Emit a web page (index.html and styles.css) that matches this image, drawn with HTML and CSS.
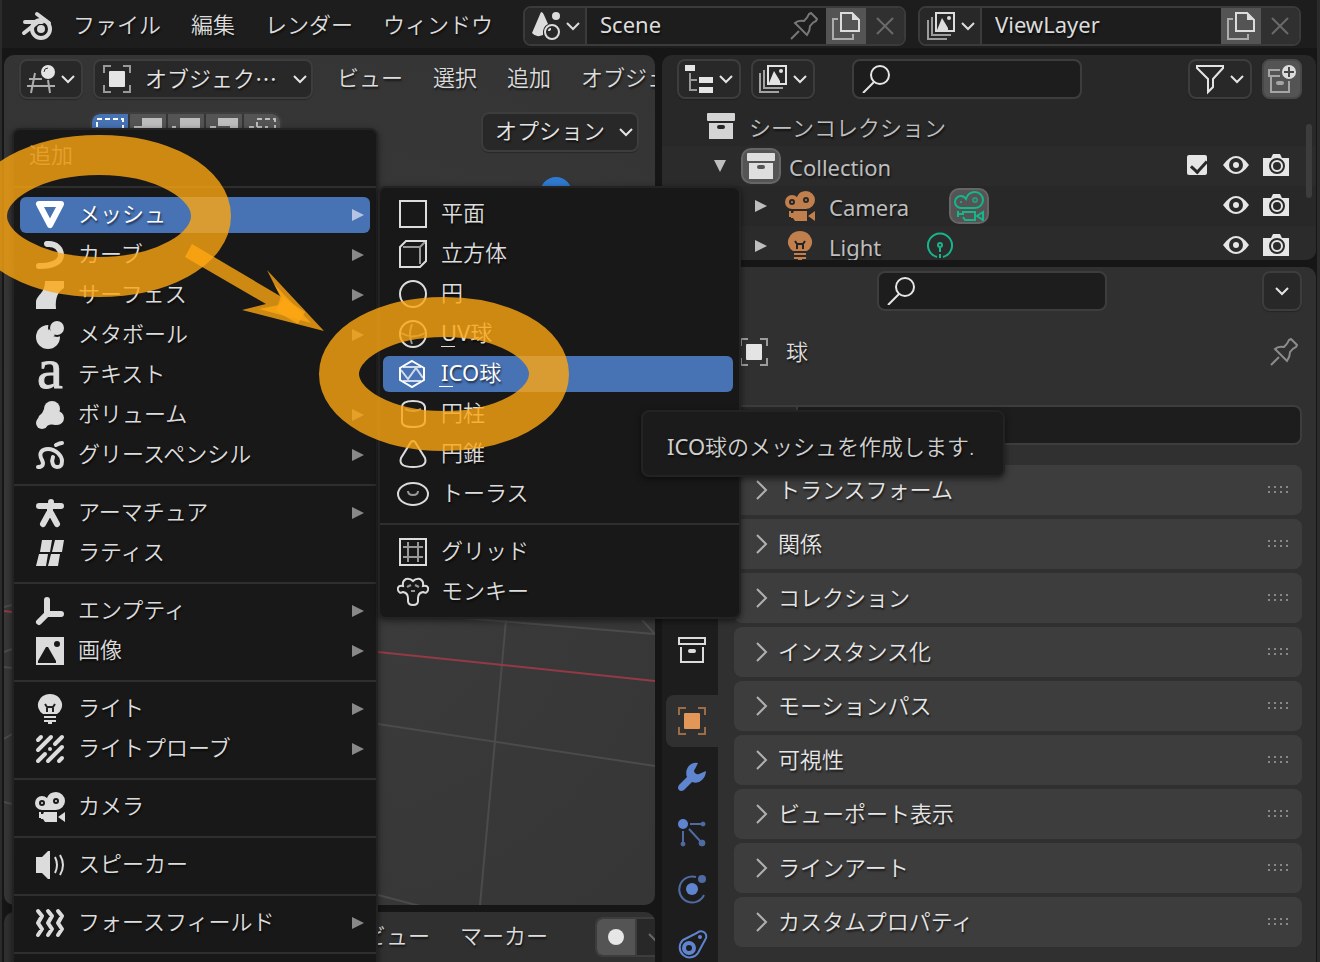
FILE: index.html
```html
<!DOCTYPE html>
<html lang="ja">
<head>
<meta charset="utf-8">
<title>Blender</title>
<link rel="stylesheet" href="styles.css">
</head>
<body>
<svg class="defs" aria-hidden="true">
  <symbol id="chev" viewBox="0 0 14 10"><path d="M1 2L7 8L13 2" fill="none" stroke="currentColor" stroke-width="2"/></symbol>
  <symbol id="chev-r" viewBox="0 0 12 20"><path d="M1 1L10 10L1 19" fill="none" stroke="currentColor" stroke-width="2"/></symbol>
  <symbol id="tri" viewBox="0 0 12 12"><path d="M0 0L12 6L0 12Z" fill="currentColor"/></symbol>
  <symbol id="cross" viewBox="0 0 18 18"><path d="M1 1L17 17M17 1L1 17" stroke="currentColor" stroke-width="2"/></symbol>
  <symbol id="dots" viewBox="0 0 22 8"><path d="M0 1h2M6 1h2M12 1h2M18 1h2M0 6h2M6 6h2M12 6h2M18 6h2" stroke="currentColor" stroke-width="2"/></symbol>
  <symbol id="pin" viewBox="0 0 28 28"><path d="M21 1L27 7L26 9Q23 10 20 14Q20 19 17 23L5 11Q8 8 14 9Q18 5 19 2ZM9 19L1 27" fill="none" stroke="currentColor" stroke-width="2"/></symbol>
  <symbol id="copy" viewBox="0 0 28 28"><path d="M6 7H1V27H21V22" fill="none" stroke="currentColor" stroke-width="2" opacity=".65"/><path d="M9 1H20L27 8V19H9Z" fill="none" stroke="currentColor" stroke-width="2"/><path d="M20 0L28 8H20Z" fill="currentColor"/></symbol>
  <symbol id="search" viewBox="0 0 28 28"><circle cx="18" cy="10" r="9" fill="none" stroke="currentColor" stroke-width="2"/><path d="M12 17L1 28" stroke="currentColor" stroke-width="2"/></symbol>
  <symbol id="object" viewBox="0 0 28 28"><path d="M1 8V1H8M20 1H27V8M27 20V27H20M8 27H1V20" fill="none" stroke="currentColor" stroke-width="2" opacity=".6"/><rect x="6" y="6" width="16" height="16" rx="1" fill="currentColor"/></symbol>
  <symbol id="layers" viewBox="0 0 28 28"><path d="M1 8V27H20M5 5V23H24" fill="none" stroke="currentColor" stroke-width="2" opacity=".65"/><rect x="9" y="1" width="18" height="18" fill="none" stroke="currentColor" stroke-width="2"/><path d="M10 18L15 6L21 16V18Z" fill="currentColor"/><circle cx="22" cy="6" r="2" fill="currentColor"/></symbol>
  <symbol id="box" viewBox="0 0 28 28"><rect y="1" width="28" height="8" rx="1" fill="currentColor"/><path fill-rule="evenodd" d="M2 11H26V27H2ZM12 13Q10 13 10 15T12 17H16Q18 17 18 15T16 13Z" fill="currentColor"/></symbol>
  <symbol id="box-line" viewBox="0 0 28 28"><path d="M1 2H27V8H1ZM3 11V26H25V11" fill="none" stroke="currentColor" stroke-width="2"/><rect x="10" y="13" width="8" height="4" rx="2" fill="currentColor"/></symbol>
  <symbol id="camera" viewBox="0 0 30 30"><path fill-rule="evenodd" fill="currentColor" d="M7 4Q10 4 12 6Q14 0 21 0A9 9 0 0 1 21 18H7A7 7 0 0 1 7 4ZM7 8A3 3 0 1 0 7 14A3 3 0 1 0 7 8ZM21 6A3 3 0 1 0 21 12A3 3 0 1 0 21 6Z"/><circle cx="7" cy="11" r="1" fill="currentColor"/><circle cx="21" cy="9" r="1" fill="currentColor"/><path d="M4 20H6V22H8L9 20H22V30H10L8 27H6V26H4ZM30 20V30L23 25Z" fill="currentColor"/></symbol>
  <symbol id="camera-line" viewBox="0 0 30 30"><path fill="none" stroke="currentColor" stroke-width="2" d="M7 5Q10 5 12 8Q14 1 21 1A8 8 0 0 1 21 17H7A6 6 0 0 1 7 5ZM4 20V26M5 23H9V21H21V29H11L9 26M29 21V29L23 25Z"/><circle cx="7" cy="11" r="1" fill="currentColor"/><circle cx="21" cy="9" r="2" fill="none" stroke="currentColor" stroke-width="2" opacity=".7"/></symbol>
  <symbol id="bulb" viewBox="0 0 28 30"><path d="M14 0A12 11 0 0 1 21 20H7A12 11 0 0 1 14 0Z" fill="currentColor"/><path d="M9 10L11 13H17L19 10M11 12V18M17 12V18" fill="none" class="hole" stroke-width="2"/><path d="M8 23H20M8 27H20M12 29H16" stroke="currentColor" stroke-width="2"/></symbol>
  <symbol id="eye" viewBox="0 0 26 18"><path fill-rule="evenodd" fill="currentColor" d="M0 9Q13-9 26 9Q13 27 0 9ZM13 2A7 7 0 1 0 13 16A7 7 0 1 0 13 2Z"/><circle cx="13" cy="9" r="3" fill="currentColor"/></symbol>
  <symbol id="photo" viewBox="0 0 26 22"><path fill-rule="evenodd" fill="currentColor" d="M0 4H8L10 0H17L19 4H26V22H0ZM14 4A8 8 0 1 0 14 20A8 8 0 1 0 14 4Z"/><circle cx="14" cy="12" r="5" fill="none" stroke="currentColor" stroke-width="2"/></symbol>
</svg>

<div class="app">
  <header class="topbar">
    <nav class="menubar">
      <svg class="logo" viewBox="0 0 30 28" aria-hidden="true"><path d="M15 2L27 11M3 10H20M2 21L16 10" fill="none" stroke="currentColor" stroke-width="4" stroke-linecap="round"/><circle cx="19" cy="17" r="9" fill="none" stroke="currentColor" stroke-width="4"/><circle cx="19" cy="17" r="4" fill="currentColor"/></svg>
      <button>ファイル</button><button>編集</button><button>レンダー</button><button>ウィンドウ</button>
    </nav>
    <div class="idbar">
      <div class="idblock">
        <button class="id-type" aria-label="シーンを選択"><svg class="i28" viewBox="0 0 28 28"><path d="M9 0Q11 0 12 3L16 12Q10 15 11 23Q4 26 0 21Z" fill="currentColor"/><circle cx="24" cy="4" r="4" fill="currentColor"/><circle cx="20" cy="20" r="7" fill="none" stroke="currentColor" stroke-width="2"/><path d="M17 19Q17 17 19 17" stroke="currentColor" fill="none" stroke-width="2"/></svg><svg class="chev"><use href="#chev"/></svg></button>
        <input class="id-name latin" aria-label="シーン名" value="Scene">
        <button class="id-pin" aria-label="ピン止め"><svg class="i28"><use href="#pin"/></svg></button>
        <button class="id-copy" aria-label="新規シーン"><svg class="i28"><use href="#copy"/></svg></button>
        <button class="id-x" aria-label="シーンを削除"><svg class="cross"><use href="#cross"/></svg></button>
      </div>
      <div class="idblock">
        <button class="id-type" aria-label="ビューレイヤーを選択"><svg class="i28"><use href="#layers"/></svg><svg class="chev"><use href="#chev"/></svg></button>
        <input class="id-name latin" aria-label="ビューレイヤー名" value="ViewLayer">
        <button class="id-copy" aria-label="新規ビューレイヤー"><svg class="i28"><use href="#copy"/></svg></button>
        <button class="id-x" aria-label="ビューレイヤーを削除"><svg class="cross"><use href="#cross"/></svg></button>
      </div>
    </div>
  </header>

  <main class="areas">
    <div class="col">
      <section class="area viewport">
        <svg class="scene" aria-hidden="true">
          <g fill="none" stroke="#4b4b4b" stroke-width="2">
            <path d="M502 565L476 850M374 669L651 711M374 556L651 579M638 565L651 579M374 840L416 851M0 552L8 550M0 597L8 594M0 612L8 613M0 684L8 679M0 747L8 749"/>
          </g>
          <path d="M0 556L8 557M374 597L651 626" stroke="#933a47" stroke-width="2"/>
          <circle cx="552" cy="138" r="16" fill="#2f7ad0"/>
        </svg>
        <div class="bar">
          <button class="drop" aria-label="エディタータイプ"><svg class="i28" viewBox="0 0 28 28"><path d="M2 14H15M0 21H28M8 8L4 28M21 15L23 28" stroke="currentColor" stroke-width="2" opacity=".7"/><circle cx="21" cy="7" r="7" fill="currentColor"/><path d="M17 7Q17 3 21 3" fill="none" stroke="#333" stroke-width="1"/></svg><svg class="chev"><use href="#chev"/></svg></button>
          <button class="drop mode"><svg class="i28"><use href="#object"/></svg><span>オブジェク…</span><svg class="chev"><use href="#chev"/></svg></button>
          <nav class="links"><button>ビュー</button><button>選択</button><button>追加</button><button>オブジェクト</button></nav>
        </div>
        <div class="bar tools">
          <div class="selmodes">
            <button class="on" aria-label="新規選択"><svg viewBox="0 0 28 28"><path d="M1 1H27V27H1Z" fill="none" stroke="currentColor" stroke-width="2" stroke-dasharray="5 3"/></svg></button>
            <button aria-label="選択を拡張"><svg viewBox="0 0 28 28"><path d="M8 0H28V20H20V28H0V8H8Z" fill="currentColor"/></svg></button>
            <button aria-label="選択から除外"><svg viewBox="0 0 28 28"><path d="M8 0H28V20H8ZM0 8H4V12H0Z" fill="currentColor"/></svg></button>
            <button aria-label="選択を反転"><svg viewBox="0 0 28 28"><path d="M8 0H28V20H20V8H8ZM0 8H6V20H20V28H0Z" fill="currentColor"/></svg></button>
            <button aria-label="選択の交差"><svg viewBox="0 0 28 28"><path d="M9 1H27V19H9ZM1 9H19V27H1Z" fill="none" stroke="currentColor" stroke-width="2" stroke-dasharray="5 3"/></svg></button>
          </div>
          <button class="drop options"><span>オプション</span><svg class="chev"><use href="#chev"/></svg></button>
        </div>
      </section>
      <section class="area timeline">
        <nav class="links"><button>ビュー</button><button>マーカー</button></nav>
        <div class="keying"><button aria-label="自動キー挿入"><i></i></button><button class="more" aria-label="キー設定"><svg class="chev"><use href="#chev"/></svg></button></div>
      </section>
    </div>

    <div class="col">
      <section class="area outliner">
        <div class="bar">
          <button class="drop" aria-label="エディタータイプ"><svg class="i28" viewBox="0 0 28 28"><path d="M5 8V25H12M5 15H12" fill="none" stroke="currentColor" stroke-width="2" opacity=".6"/><path d="M0 0H10V6H0ZM14 12H28V18H14ZM14 22H28V28H14Z" fill="currentColor"/></svg><svg class="chev"><use href="#chev"/></svg></button>
          <button class="drop" aria-label="表示モード"><svg class="i28"><use href="#layers"/></svg><svg class="chev"><use href="#chev"/></svg></button>
          <label class="search"><svg class="i28"><use href="#search"/></svg><input type="search" aria-label="検索"></label>
          <button class="drop filter" aria-label="フィルター"><svg class="i28" viewBox="0 0 28 28"><path d="M1 1H27V3L17 14V22L12 27V14L1 3Z" fill="none" stroke="currentColor" stroke-width="2"/></svg><svg class="chev"><use href="#chev"/></svg></button>
          <button class="newcol" aria-label="新規コレクション"><svg viewBox="0 0 28 28" class="i28"><path d="M12 5H1V11H12M3 12V27H21V16" fill="none" stroke="currentColor" stroke-width="2" opacity=".6"/><rect x="8" y="16" width="8" height="4" rx="2" fill="currentColor" opacity=".6"/><circle cx="21" cy="7" r="7" fill="currentColor"/><path d="M16 7H26M21 2V12" stroke="#484848" stroke-width="2"/></svg></button>
        </div>
        <div class="tree">
          <div class="row root"><svg class="i28"><use href="#box"/></svg><span>シーンコレクション</span></div>
          <div class="row lv1"><svg class="tri down"><use href="#tri"/></svg><span class="badge"><svg class="i28"><use href="#box"/></svg></span><span class="latin">Collection</span>
            <div class="flags"><input type="checkbox" checked aria-label="Collection を有効化"><button aria-label="表示"><svg class="eye"><use href="#eye"/></svg></button><button aria-label="レンダー"><svg class="photo"><use href="#photo"/></svg></button></div></div>
          <div class="row lv2"><svg class="tri"><use href="#tri"/></svg><svg class="i30 orange"><use href="#camera"/></svg><span class="latin">Camera</span><span class="badge data-cam"><svg class="i30 green"><use href="#camera-line"/></svg></span>
            <div class="flags"><button aria-label="表示"><svg class="eye"><use href="#eye"/></svg></button><button aria-label="レンダー"><svg class="photo"><use href="#photo"/></svg></button></div></div>
          <div class="row lv2"><svg class="tri"><use href="#tri"/></svg><svg class="i30 orange"><use href="#bulb"/></svg><span class="latin">Light</span><svg class="i30 green data-light" viewBox="0 0 30 30"><path d="M12 26A12 12 0 1 1 18 26" fill="none" stroke="currentColor" stroke-width="2"/><circle cx="15" cy="14" r="2" fill="none" stroke="currentColor" stroke-width="2"/><path d="M15 17V30" stroke="currentColor" stroke-width="2" stroke-dasharray="4 2"/></svg>
            <div class="flags"><button aria-label="表示"><svg class="eye"><use href="#eye"/></svg></button><button aria-label="レンダー"><svg class="photo"><use href="#photo"/></svg></button></div></div>
          <div class="scroll"></div>
        </div>
      </section>

      <section class="area props">
        <nav class="tabs">
          <button aria-label="ツール"><svg class="i28"><use href="#box-line"/></svg></button>
          <button class="gap" aria-label="レンダー"><svg class="i28"><use href="#photo"/></svg></button>
          <button aria-label="出力"><svg class="i28"><use href="#copy"/></svg></button>
          <button aria-label="ビューレイヤー"><svg class="i28"><use href="#layers"/></svg></button>
          <button aria-label="シーン"><svg class="i28"><use href="#camera"/></svg></button>
          <button aria-label="ワールド"><svg class="i28"><use href="#bulb"/></svg></button>
          <button aria-label="コレクション"><svg class="i28"><use href="#box-line"/></svg></button>
          <button class="gap on" aria-label="オブジェクト"><svg class="i28"><use href="#object"/></svg></button>
          <button class="blue" aria-label="モディファイアー"><svg class="i28" viewBox="0 0 28 28"><path d="M20 0Q14-1 10 4Q7 9 9 14L1 22Q-1 25 1 27T6 27L14 19Q20 21 24 17Q28 13 28 8L21 11Q19 12 17 10Q15 8 17 6Z" fill="currentColor"/></svg></button>
          <button class="blue" aria-label="パーティクル"><svg class="i28" viewBox="0 0 28 28"><circle cx="5" cy="5" r="5" fill="currentColor"/><g opacity=".75" fill="currentColor" stroke="currentColor"><path d="M12 5H25M5 12V25M11 10L23 23" stroke-width="2"/><circle cx="25" cy="5" r="2"/><circle cx="5" cy="25" r="2"/><circle cx="24" cy="24" r="3"/></g></svg></button>
          <button class="blue" aria-label="物理演算"><svg class="i28" viewBox="0 0 28 28"><circle cx="14" cy="14" r="6" fill="currentColor"/><g opacity=".75"><path d="M18 2A13 13 0 1 0 26 20" fill="none" stroke="currentColor" stroke-width="2"/><circle cx="24" cy="4" r="4" fill="currentColor"/></g></svg></button>
          <button class="blue" aria-label="コンストレイント"><svg class="i28" viewBox="0 0 28 28"><path d="M5 9L19 2A5 5 0 0 1 27 9L20 22A10 10 0 1 1 5 9Z" fill="none" stroke="currentColor" stroke-width="2"/><circle cx="11" cy="17" r="5" fill="none" stroke="currentColor" stroke-width="4"/><circle cx="22" cy="6" r="2" fill="currentColor"/></svg></button>
        </nav>
        <div class="prop-main">
          <div class="prop-bar"><label class="search"><svg class="i28"><use href="#search"/></svg><input type="search" aria-label="プロパティを検索"></label><button class="drop only" aria-label="オプション"><svg class="chev"><use href="#chev"/></svg></button></div>
          <div class="crumb"><svg class="i28"><use href="#object"/></svg><span>球</span><button aria-label="ピン止め"><svg class="i28"><use href="#pin"/></svg></button></div>
          <div class="namefield"><button aria-label="オブジェクトを選択"></button><input aria-label="オブジェクト名"></div>
          <div class="panels">
            <button><svg><use href="#chev-r"/></svg><span>トランスフォーム</span><svg class="dots"><use href="#dots"/></svg></button>
            <button><svg><use href="#chev-r"/></svg><span>関係</span><svg class="dots"><use href="#dots"/></svg></button>
            <button><svg><use href="#chev-r"/></svg><span>コレクション</span><svg class="dots"><use href="#dots"/></svg></button>
            <button><svg><use href="#chev-r"/></svg><span>インスタンス化</span><svg class="dots"><use href="#dots"/></svg></button>
            <button><svg><use href="#chev-r"/></svg><span>モーションパス</span><svg class="dots"><use href="#dots"/></svg></button>
            <button><svg><use href="#chev-r"/></svg><span>可視性</span><svg class="dots"><use href="#dots"/></svg></button>
            <button><svg><use href="#chev-r"/></svg><span>ビューポート表示</span><svg class="dots"><use href="#dots"/></svg></button>
            <button><svg><use href="#chev-r"/></svg><span>ラインアート</span><svg class="dots"><use href="#dots"/></svg></button>
            <button><svg><use href="#chev-r"/></svg><span>カスタムプロパティ</span><svg class="dots"><use href="#dots"/></svg></button>
          </div>
        </div>
      </section>
    </div>
  </main>

  <div class="menu add-menu">
    <div class="menu-title">追加</div>
    <hr>
    <button class="on"><svg class="i28" viewBox="0 0 28 28"><path d="M3 3H25L14 24Z" fill="none" stroke="currentColor" stroke-width="6" stroke-linejoin="round"/></svg><span>メッシュ</span><svg class="tri"><use href="#tri"/></svg></button>
    <button><svg class="i28" viewBox="0 0 28 28"><path d="M11 3C20 2 25 8 25 14C25 21 17 25 3 25" fill="none" stroke="currentColor" stroke-width="6" stroke-linecap="round"/></svg><span>カーブ</span><svg class="tri"><use href="#tri"/></svg></button>
    <button><svg class="i28" viewBox="0 0 28 28"><path d="M9 0H28V7C22 11 19 16 20 28H0V21C1 13 9 13 9 0Z" fill="currentColor"/></svg><span>サーフェス</span><svg class="tri"><use href="#tri"/></svg></button>
    <button><svg class="i28" viewBox="0 0 28 28"><circle cx="12" cy="16" r="12" fill="currentColor"/><circle cx="21" cy="7" r="9" class="punch"/><circle cx="21" cy="7" r="7" fill="currentColor"/><path d="M13 8L19 14L15 17L10 13Z" fill="currentColor"/></svg><span>メタボール</span><svg class="tri"><use href="#tri"/></svg></button>
    <button><svg class="i28 glyph" viewBox="0 0 28 28" aria-hidden="true"><text x="1" y="27">a</text></svg><span>テキスト</span></button>
    <button><svg class="i28" viewBox="0 0 28 28"><circle cx="16" cy="8" r="8" fill="currentColor"/><circle cx="6" cy="22" r="6" fill="currentColor"/><circle cx="21" cy="17" r="7" fill="currentColor"/><path d="M8 8Q7 12 3 15L1 20L9 27Q12 22 20 24L24 14Z" fill="currentColor"/></svg><span>ボリューム</span><svg class="tri"><use href="#tri"/></svg></button>
    <button><svg class="i28" viewBox="0 0 28 28"><path d="M2 26C7 26 8 23 6 19C2 12 6 8 12 8C20 8 26 15 26 20C26 25 24 26 21 26C17 26 15 21 17 16M20 4C22 3 24 2 26 2" fill="none" stroke="currentColor" stroke-width="4" stroke-linecap="round"/></svg><span>グリースペンシル</span><svg class="tri"><use href="#tri"/></svg></button>
    <hr>
    <button><svg class="i28" viewBox="0 0 28 28"><circle cx="15" cy="3" r="3" fill="currentColor"/><path d="M3 7H25M14 8V15M13 14L7 25M15 14L21 25" fill="none" stroke="currentColor" stroke-width="6" stroke-linecap="round"/></svg><span>アーマチュア</span><svg class="tri"><use href="#tri"/></svg></button>
    <button><svg class="i28" viewBox="0 0 28 28"><path d="M6 1H16L14 13H4ZM19 1H28L26 13H16ZM3 15H12L10 27H0ZM15 15H24L22 27H12Z" fill="currentColor"/></svg><span>ラティス</span></button>
    <hr>
    <button><svg class="i28" viewBox="0 0 28 28"><path d="M11 3V17H25M11 17L3 25" fill="none" stroke="currentColor" stroke-width="6" stroke-linecap="round"/></svg><span>エンプティ</span><svg class="tri"><use href="#tri"/></svg></button>
    <button><svg class="i28" viewBox="0 0 28 28"><path fill-rule="evenodd" d="M0 0H28V28H0ZM2 26H20V24L12 10H10L2 24ZM21 4A3 3 0 1 0 21 10A3 3 0 1 0 21 4Z" fill="currentColor"/></svg><span>画像</span><svg class="tri"><use href="#tri"/></svg></button>
    <hr>
    <button><svg class="i30"><use href="#bulb"/></svg><span>ライト</span><svg class="tri"><use href="#tri"/></svg></button>
    <button><svg class="i28" viewBox="0 0 28 28"><path d="M2 5L5 2M2 15L15 2M2 26L9 19M19 9L26 2M12 26L26 12M23 26L26 23" stroke="currentColor" stroke-width="4" stroke-linecap="round"/><circle cx="14" cy="14" r="2" fill="currentColor"/></svg><span>ライトプローブ</span><svg class="tri"><use href="#tri"/></svg></button>
    <hr>
    <button><svg class="i30"><use href="#camera"/></svg><span>カメラ</span></button>
    <hr>
    <button><svg class="i28" viewBox="0 0 28 28"><path d="M0 6H6L12 0H14V28H12L6 22H0Z" fill="currentColor"/><path d="M19 6Q23 14 19 22M24 4Q30 14 24 24" fill="none" stroke="currentColor" stroke-width="2"/></svg><span>スピーカー</span></button>
    <hr>
    <button><svg class="i28" viewBox="0 0 28 28"><path d="M2 2L6 7L2 14L6 20L2 26M12 2L16 7L12 14L16 20L12 26M22 2L26 7L22 14L26 20L22 26" fill="none" stroke="currentColor" stroke-width="4" stroke-linecap="round" stroke-linejoin="round"/></svg><span>フォースフィールド</span><svg class="tri"><use href="#tri"/></svg></button>
    <hr>
  </div>

  <div class="menu mesh-menu">
    <button><svg class="i28 line" viewBox="0 0 28 28"><path d="M1 1H27V27H1Z"/></svg><span>平面</span></button>
    <button><svg class="i28 line" viewBox="0 0 28 28"><path d="M1 7L7 1H27V21L21 27H1Z"/><path d="M4 7H21V24M21 7L26 2" opacity=".65"/></svg><span>立方体</span></button>
    <button><svg class="i28 line" viewBox="0 0 28 28"><circle cx="14" cy="14" r="13"/></svg><span>円</span></button>
    <button><svg class="i28 line" viewBox="0 0 28 28"><circle cx="14" cy="14" r="13"/><path d="M2 13Q14 20 26 13M13 4Q9 14 13 24" opacity=".65"/></svg><span><span class="latin"><span class="key">U</span>V</span>球</span></button>
    <button class="on"><svg class="i28 line" viewBox="0 0 28 28"><path d="M13 1L25 8V20L13 27L1 20V8Z"/><path d="M4 7H22M4 21H22M2 10L9 19L17 8L24 18" opacity=".75"/></svg><span><span class="latin"><span class="key wide">I</span>CO</span>球</span></button>
    <button><svg class="i28 line" viewBox="0 0 28 28"><path d="M3 7Q3 1 14 1T26 7V21Q26 27 14 27T3 21Z"/><path d="M6 9Q14 13 22 9" opacity=".65"/></svg><span>円柱</span></button>
    <button><svg class="i28 line" viewBox="0 0 28 28"><path d="M12 2Q14 0 16 2L26 18Q29 27 14 27T2 18Z"/></svg><span>円錐</span></button>
    <button><svg class="i28 line" viewBox="0 0 28 28"><ellipse cx="14" cy="14" rx="15" ry="11"/><path d="M9 11Q9 15 14 15T19 11" opacity=".65"/></svg><span>トーラス</span></button>
    <hr>
    <button><svg class="i28 line" viewBox="0 0 28 28"><path d="M1 1H27V27H1Z"/><path d="M4 9H24M4 19H24M9 4V24M19 4V24" opacity=".65"/></svg><span>グリッド</span></button>
    <button><svg class="i28 line" viewBox="0 0 28 28"><path d="M14 3Q11 0 7 1Q3 3 4 8Q-2 7-1 12Q0 16 4 14Q9 15 9 20V23Q9 27 14 27T19 23V20Q19 15 24 14Q28 16 29 12Q30 7 24 8Q25 3 21 1Q17 0 14 3Z"/><path d="M8 9L12 7M20 9L16 7M12 13H16" opacity=".65"/></svg><span>モンキー</span></button>
  </div>

  <div class="tooltip" role="tooltip"><span class="latin">ICO</span>球のメッシュを作成します.</div>
</div>

<svg class="marks" aria-hidden="true">
  <g fill="none" stroke="#fca613" stroke-opacity=".8" stroke-width="40">
    <ellipse cx="99" cy="216" rx="112" ry="61"/>
    <ellipse cx="444" cy="374" rx="105" ry="57"/>
  </g>
  <g fill="#fca613" fill-opacity=".8">
    <path d="M192 244L280 296L267 270L324 331L242 310L266 304L185 257Z"/>
    <path d="M274 284L311 323L259 309L279 305L283 300Z"/>
    <path d="M281 296L305 312L298 324L276 311Z"/>
    <path d="M192 244L213 257L202 267L185 257Z" fill-opacity=".3"/>
  </g>
</svg>
</body>
</html>
```
FILE: styles.css
```css
* { box-sizing: border-box; }
body {
  position: relative;
  margin: 0;
  background: #161616;
  color: #dcdcdc;
  font: 350 22px/32px "Noto Sans", "Noto Sans CJK JP", sans-serif;
  text-shadow: 1px 2px 2px rgba(0, 0, 0, .6);
  white-space: nowrap;
}
button, input {
  font: inherit; color: inherit; text-shadow: inherit;
  background: none; border: 0; padding: 0; margin: 0; min-width: 0;
}
svg { display: block; flex: none; overflow: visible; }
.latin { font-weight: 400; }
.defs { position: absolute; width: 0; height: 0; }
.i28 { width: 28px; height: 28px; }
.i30 { width: 30px; height: 30px; }
.chev { width: 14px; height: 10px; }
.cross { width: 18px; height: 18px; }
.tri { width: 12px; height: 12px; }
.hole { stroke: #222; }
.punch { fill: #181818; }
.line { fill: none; stroke: currentColor; stroke-width: 2; }
.orange { color: #c07f4c; }
.green { color: #16b58c; }

.app {
  position: relative; display: flex; flex-direction: column;
  height: 100vh; overflow: hidden;
  border: solid #2b2b2b; border-width: 0 3px 0 2px;
}

/* top bar */
.topbar {
  flex: none; display: flex; justify-content: space-between; align-items: center; gap: 16px;
  height: 48px; margin-bottom: 7px; padding: 4px 16px 0 20px; background: #1d1d1d;
}
.menubar { display: flex; align-items: center; gap: 30px; }
.menubar button { padding-bottom: 4px; }
.logo { width: 30px; height: 28px; margin-right: -9px; color: #d8d8d8; }
.idbar { display: flex; gap: 12px; }
.idblock {
  display: flex; width: 383px; height: 40px; overflow: hidden;
  border: 2px solid #3b3b3b; border-radius: 8px; background: #1d1d1d;
}
.idblock button { display: flex; align-items: center; justify-content: center; }
.idblock .id-type { width: 62px; gap: 6px; padding-left: 2px; background: #282828; border-right: 2px solid #3b3b3b; }
.id-name { flex: 1; padding: 0 0 4px 13px; }
.id-pin { width: 44px; color: #777; }
.id-copy { width: 40px; background: #545454; }
.id-x { width: 38px; background: #303030; color: #6a6a6a; }

/* editor areas */
.areas {
  flex: 1; min-height: 0; display: grid; gap: 7px; padding: 0 1px 0 2px;
  grid-template-columns: minmax(0, 651fr) minmax(0, 654fr);
}
.col { display: flex; flex-direction: column; gap: 7px; min-height: 0; }
.area { position: relative; overflow: hidden; border-radius: 10px; }
.bar { position: relative; display: flex; align-items: center; height: 48px; }
.drop {
  display: flex; align-items: center; justify-content: center; gap: 6px; flex: none;
  width: 64px; height: 40px; border: 2px solid #3d3d3d; border-radius: 8px; background: #282828;
  color: #e4e4e4; box-shadow: 0 1px 1px rgba(0, 0, 0, .25);
}
.links { display: flex; gap: 30px; padding-bottom: 4px; }

.viewport { flex: 1; background: radial-gradient(circle at 50% 60%, #3c3c3c, #383838 45%, #343434); }
.scene { position: absolute; inset: 0; width: 100%; height: 100%; }
.viewport .bar { padding-left: 15px; }
.mode { width: 220px; justify-content: flex-start; gap: 14px; margin: 0 24px 0 10px; padding: 0 4px 0 8px; }
.mode span { flex: 1; overflow: hidden; text-align: left; padding-bottom: 4px; font-family: "Noto Sans CJK JP", sans-serif; }
.viewport .tools { height: 58px; justify-content: space-between; padding: 0 16px 0 88px; }
.selmodes { display: flex; gap: 2px; height: 36px; border-radius: 8px; overflow: hidden; outline: 2px solid #3d3d3d; }
.selmodes button { width: 36px; padding: 4px; background: #545454; color: #bdbdbd; }
.selmodes .on { background: #4772b3; color: #fff; }
.options { width: 158px; justify-content: space-between; padding: 0 4px 0 12px; }
.options span { padding-bottom: 4px; }

.timeline {
  flex: none; display: flex; align-items: center; justify-content: space-between;
  height: 60px; margin-bottom: -10px; padding: 0 0 10px 360px; background: #303030;
}
.keying { display: flex; width: 60px; height: 40px; border: 2px solid #3d3d3d; border-right: 0; border-radius: 8px 0 0 8px; overflow: hidden; background: #282828; }
.keying button { display: flex; align-items: center; justify-content: center; flex: none; width: 38px; background: #545454; }
.keying .more { background: #282828; color: #666; border-left: 2px solid #3d3d3d; }
.keying i { width: 16px; height: 16px; border-radius: 50%; background: #e6e6e6; }

.outliner { flex: none; height: 205px; background: #282828; }
.outliner .bar { gap: 10px; padding: 0 14px 0 15px; }
.search {
  display: flex; align-items: center; gap: 8px; width: 230px; height: 40px; padding: 0 8px;
  border: 2px solid #3d3d3d; border-radius: 8px; background: #1d1d1d; color: #e6e6e6;
}
.search input { flex: 1; outline: 0; }
.outliner .search { margin-left: 27px; }
.filter { margin-left: auto; }
.newcol { display: flex; align-items: center; justify-content: center; width: 40px; height: 40px; border: 2px solid #484848; border-radius: 8px; background: #545454; }
.tree { position: relative; padding-top: 3px; color: #bebebe; }
.row { display: flex; align-items: center; height: 40px; padding-right: 27px; }
.row:nth-child(even) { background: #2b2b2b; }
.row > span { padding-top: 2px; }
.root { padding-left: 45px; gap: 14px; }
.root svg { color: #d4d4d4; }
.lv1 { padding-left: 52px; gap: 8px; }
.lv1 .tri { margin-right: 7px; }
.lv2 { padding-left: 93px; gap: 14px; }
.lv2 .tri { margin-right: 4px; }
.down { transform: rotate(90deg); }
.row .badge { display: flex; align-items: center; justify-content: center; width: 40px; height: 36px; padding: 0; border: 2px solid #666; border-radius: 10px; background: #545454; color: #dedede; }
.row .green { color: #16b58c; }
.row .data-cam { margin-left: 26px; }
.data-light { margin-left: 30px; }
.flags { display: flex; align-items: center; gap: 14px; margin-left: auto; padding-bottom: 2px; color: #e6e6e6; }
.flags button { width: 26px; }
.flags input { position: relative; appearance: none; width: 20px; height: 20px; margin-right: 2px; border-radius: 2px; background: #e6e6e6; }
.flags input::after {
  content: ""; position: absolute; left: 7px; top: 2px; width: 7px; height: 13px;
  border: solid #282828; border-width: 0 3px 3px 0; transform: rotate(42deg);
}
.eye { width: 26px; height: 18px; }
.photo { width: 26px; height: 22px; }
.scroll { position: absolute; right: 4px; top: 21px; width: 6px; height: 74px; border-radius: 3px; background: #3d3d3d; }

/* properties editor */
.props { flex: 1; display: flex; background: #303030; border-radius: 10px 10px 0 0; }
.tabs { flex: none; width: 56px; display: flex; flex-direction: column; gap: 4px; padding: 6px 0 0 4px; background: #1d1d1d; }
.tabs button { flex: none; display: flex; align-items: center; justify-content: center; height: 52px; border-radius: 8px 0 0 8px; }
.tabs .gap { margin-top: 15px; }
.tabs .on { background: #303030; color: #e29657; }
.tabs .blue { color: #6085d0; }
.prop-main { flex: 1; min-width: 0; padding: 4px 14px 0 16px; }
.prop-bar { display: flex; align-items: center; justify-content: space-between; padding-left: 143px; }
.only { width: 40px; }
.crumb { display: flex; align-items: center; gap: 18px; height: 82px; padding: 0 4px 0 6px; }
.crumb > svg { color: #e4e4e4; }
.crumb span { flex: 1; padding-bottom: 2px; }
.crumb button { color: #8c8c8c; }
.namefield { display: flex; height: 40px; margin-top: 12px; border: 2px solid #3d3d3d; border-radius: 8px; overflow: hidden; background: #1d1d1d; }
.namefield button { width: 62px; background: #282828; border-right: 2px solid #3d3d3d; }
.namefield input { flex: 1; }
.panels { display: flex; flex-direction: column; gap: 4px; margin-top: 20px; }
.panels button {
  display: flex; align-items: center; gap: 10px; height: 50px; padding: 0 12px 0 22px;
  border-radius: 8px; background: #3d3d3d; text-align: left; color: #e6e6e6;
}
.panels svg { width: 12px; height: 20px; color: #b0b0b0; }
.panels span { flex: 1; padding-bottom: 2px; }
.panels .dots { width: 22px; height: 8px; color: #888; }

/* floating menus */
.menu {
  position: absolute; display: flex; flex-direction: column;
  padding: 6px 0 5px; border: 2px solid #232323; border-radius: 8px;
  background: #181818; box-shadow: 0 2px 6px rgba(0, 0, 0, .5);
}
.add-menu { left: 10px; top: 128px; bottom: -12px; width: 366px; padding-top: 0; }
.mesh-menu { left: 376px; top: 186px; width: 363px; }
.menu-title { flex: none; height: 56px; padding: 8px 15px; color: #8c8c8c; }
.menu hr { flex: none; width: 100%; height: 2px; margin: 9px 0 7px; border: 0; background: #2e2e2e; }
.menu-title + hr { margin-top: 0; }
.menu button {
  flex: none; display: flex; align-items: center; gap: 14px;
  height: 36px; margin: 2px 6px; padding: 0 6px 0 16px; border-radius: 6px; text-align: left;
}
.mesh-menu button { margin-left: 3px; }
.menu button > span { flex: 1; padding-bottom: 4px; }
.menu .i30 { margin: 0 -1px; }
.menu .tri { color: #888; }
.menu .on { background: #4772b3; color: #fff; }
.menu .on .tri { color: #b4c4e2; }
.glyph text { font: 58px "Liberation Serif", serif; fill: currentColor; stroke: currentColor; stroke-width: 1; text-shadow: none; }
.key { position: relative; }
.key::after { content: ""; position: absolute; left: 0; bottom: 0; width: 14px; height: 1px; background: currentColor; }
.wide::after { left: -2px; }
.tooltip {
  position: absolute; left: 639px; top: 410px; padding: 18px 29px 13px 24px;
  border: 2px solid #232323; border-radius: 8px; background: #1b1b1b; color: #cfcfcf;
  box-shadow: 0 2px 6px rgba(0, 0, 0, .5);
}
.marks { position: absolute; inset: 0; width: 100%; height: 100%; overflow: hidden; pointer-events: none; }
```
